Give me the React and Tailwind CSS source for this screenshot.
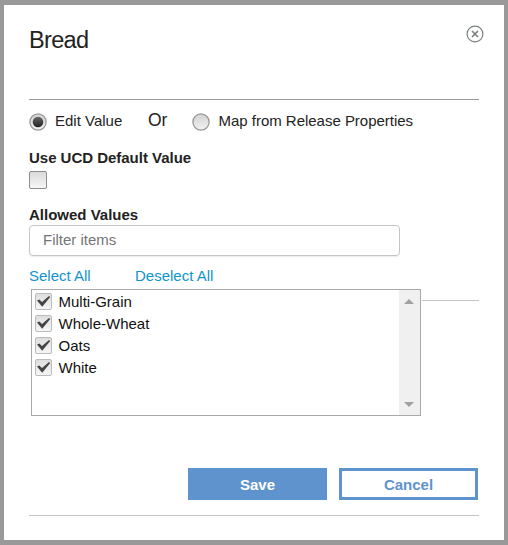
import React from 'react';

const values = ['Multi-Grain', 'Whole-Wheat', 'Oats', 'White'];

function Radio({ checked }) {
  return (
    <svg className="mt-[1px] h-[18px] w-[18px] shrink-0" viewBox="0 0 18 18">
      <defs>
        <linearGradient id="ring" x1="0" y1="0" x2="0" y2="1">
          <stop offset="0" stopColor="#d2d2d2" />
          <stop offset="1" stopColor="#f2f2f2" />
        </linearGradient>
        <linearGradient id="dot" x1="0" y1="0" x2="0" y2="1">
          <stop offset="0" stopColor="#666" />
          <stop offset="1" stopColor="#222" />
        </linearGradient>
      </defs>
      <circle cx="9" cy="9" r="8.1" fill="url(#ring)" stroke="#9a9a9a" strokeWidth="1.3" />
      {checked && <circle cx="9" cy="9" r="5.3" fill="url(#dot)" />}
    </svg>
  );
}

function CheckedBox() {
  return (
    <span className="flex h-[17px] w-[17px] items-center justify-center rounded-[2px] border border-[#bcbcbc] bg-linear-to-b from-[#dedede] to-[#f6f6f6]">
      <svg className="h-[15px] w-[15px]" viewBox="0 0 15 15">
        <path d="M1 6.6 L3.4 5.4 L6 8 L13 2 L14.2 3 L6.2 12.8 Z" fill="#454545" />
      </svg>
    </span>
  );
}

export default function App() {
  return (
    <div className="h-[545px] w-[508px] border-x-4 border-y-[5px] border-[#999] bg-white pl-[25px] font-['Liberation_Sans',Arial,sans-serif] text-[15px] leading-[18px] text-[#222]">
      <header className="flex h-[95px] w-[450px] justify-between border-b border-[#999]">
        <h1 className="mt-[22px] text-[23.5px] leading-[26px] tracking-[-0.65px]">Bread</h1>
        <button className="-mr-[5px] mt-[20px] h-[18px] w-[18px]" aria-label="Close">
          <svg className="h-[18px] w-[18px]" viewBox="0 0 18 18" fill="none" stroke="#7a8080">
            <circle cx="9" cy="9" r="7.9" strokeWidth="1.2" />
            <path d="M6 6 L12 12 M12 6 L6 12" strokeWidth="1.7" />
          </svg>
        </button>
      </header>

      <div className="flex h-[49px] pt-[12px]">
        <Radio checked />
        <span className="ml-[8px] w-[93px] whitespace-nowrap">Edit Value</span>
        <span className="w-[44px] text-[17.5px] leading-[17px]">Or</span>
        <Radio />
        <span className="ml-[8.5px] whitespace-nowrap tracking-[-0.02px]">Map from Release Properties</span>
      </div>

      <div className="h-[22px] font-bold tracking-[-0.02px]">Use UCD Default Value</div>
      <div className="h-[18px] w-[18px] rounded-[2px] border border-[#8e8e8e] bg-linear-to-b from-[#dadada] to-[#f6f6f6]" />
      <div className="mt-[17px] h-[19px] font-bold">Allowed Values</div>
      <input
        className="block h-[31px] w-[371px] rounded-[4px] border border-[#c4c4c4] px-[13px] pb-[2px] shadow-[0_1px_1px_#eee] outline-none placeholder:text-[#757575]"
        placeholder="Filter items"
      />
      <div className="flex h-[33px] pt-[11px] text-[#1193cb]">
        <a className="w-[106px]">Select All</a>
        <a>Deselect All</a>
      </div>

      <div className="flex">
        <div className="ml-[2px] flex h-[127px] w-[390px] border border-[#a9a9a9]">
          <ul className="flex-1 pl-[3px]">
            {values.map((v) => (
              <li key={v} className="flex h-[22px] items-center gap-[6.5px] text-[#111]">
                <CheckedBox />
                <span className="mt-[2px]">{v}</span>
              </li>
            ))}
          </ul>
          <div className="flex w-[21px] flex-col items-center justify-between bg-[#f0f0f0] pb-[8px] pr-px pt-[9px]">
            <svg className="h-[5px] w-[10px]" viewBox="0 0 10 5"><path d="M0 5 L5 0 L10 5Z" fill="#a0a0a0" /></svg>
            <svg className="h-[5px] w-[10px]" viewBox="0 0 10 5"><path d="M0 0 L5 5 L10 0Z" fill="#a0a0a0" /></svg>
          </div>
        </div>
        <div className="ml-[1px] mt-[11px] h-px w-[57px] bg-[#c4c4c4]" />
      </div>

      <div className="mt-[52px] flex h-[32px] gap-[12px] pl-[159px] font-bold">
        <button className="w-[139px] bg-[#5f93cd] pt-[2px] text-white">Save</button>
        <button className="w-[139px] border-[3px] border-[#5f93cd] pt-[2px] text-[#5f93cd]">Cancel</button>
      </div>
      <div className="mt-[15px] h-px w-[450px] bg-[#c4c4c4]" />
    </div>
  );
}
